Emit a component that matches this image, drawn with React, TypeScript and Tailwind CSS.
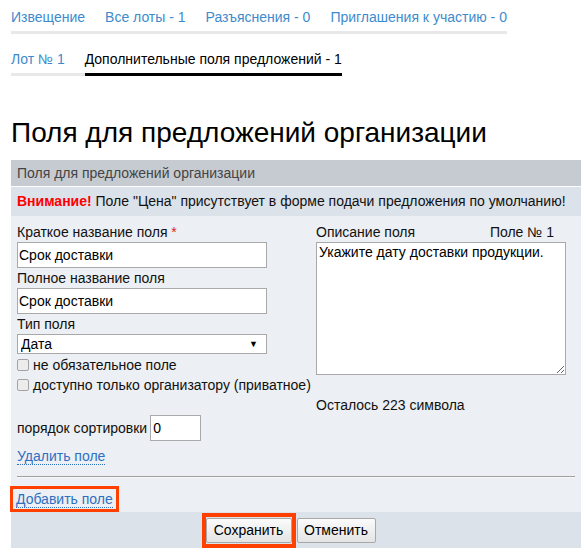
import React from "react";

export default function App() {
  return (
    <div className="font-['Liberation_Sans',Arial,sans-serif] text-[14px] text-[#111] bg-white w-[581px] h-[560px] overflow-hidden">
      {/* top tabs */}
      <div className="pl-[11px] pt-[7px]">
        <ul className="inline-flex gap-[20px] border-b-[3px] border-[#e8e8e8] pb-[4px] leading-[20px] text-[#3d8bcd]">
          <li>Извещение</li>
          <li>Все лоты - 1</li>
          <li>Разъяснения - 0</li>
          <li>Приглашения к участию - 0</li>
        </ul>
        <ul className="flex mt-[15px] leading-[20px]">
          <li className="pr-[20px] pb-[4px] border-b-[3px] border-[#e8e8e8] text-[#3d8bcd]">Лот № 1</li>
          <li className="pb-[4px] border-b-[3px] border-black text-black">Дополнительные поля предложений - 1</li>
        </ul>
      </div>

      <h1 className="ml-[11px] mt-[41px] text-[28px] leading-[32px] text-black">Поля для предложений организации</h1>

      <div className="ml-[11px] mt-[11px]">
        <div className="h-[26px] bg-[#c6cbd2] px-[6px] leading-[26px] text-[#444]">Поля для предложений организации</div>
        <div className="h-[30px] bg-[#dce2ea] border-t border-white px-[6px] leading-[29px] whitespace-nowrap">
          <b className="text-[#ff0000]">Внимание!</b> Поле "Цена" присутствует в форме подачи предложения по умолчанию!
        </div>

        <div className="bg-[#eceff3] px-[6px] pt-[7px]">
          <div className="grid grid-cols-[250px_250px] gap-x-[49px]">
            <div>
              <div className="leading-[18px]">
                Краткое название поля <span className="text-[#e02020]">*</span>
              </div>
              <input
                readOnly
                value="Срок доставки"
                className="mt-[1px] block w-[250px] h-[26px] border border-[#a9a9a9] bg-white px-[1px] text-[14px] text-black outline-none"
              />
              <div className="leading-[18px] mt-[1px]">Полное название поля</div>
              <input
                readOnly
                value="Срок доставки"
                className="mt-[1px] block w-[250px] h-[26px] border border-[#a9a9a9] bg-white px-[1px] text-[14px] text-black outline-none"
              />
              <div className="leading-[18px] mt-[1px]">Тип поля</div>
              <div className="relative mt-[1px] w-[250px] h-[20px]">
                <select className="appearance-none block w-full h-full border border-[#a9a9a9] bg-white pl-[3px] text-[14px] leading-[18px] text-black outline-none">
                  <option>Дата</option>
                </select>
                <span className="absolute right-[9px] top-[3px] text-[9px] leading-[14px] text-black pointer-events-none">▼</span>
              </div>
              <label className="flex items-center h-[20px] mt-[1px] whitespace-nowrap">
                <span className="shrink-0 w-[12px] h-[12px] rounded-[2px] border border-[#a3a3a3] bg-[#ececec] mr-[4px]" />
                не обязательное поле
              </label>
              <label className="flex items-center h-[20px] whitespace-nowrap">
                <span className="shrink-0 w-[12px] h-[12px] rounded-[2px] border border-[#a3a3a3] bg-[#ececec] mr-[4px]" />
                доступно только организатору (приватное)
              </label>
            </div>

            <div>
              <div className="flex justify-between leading-[18px] pr-[12px]">
                <span>Описание поля</span>
                <span>Поле № 1</span>
              </div>
              <textarea
                readOnly
                value="Укажите дату доставки продукции."
                className="mt-[1px] block w-[250px] h-[133px] border border-[#a9a9a9] bg-white px-[2px] py-[1px] text-[14px] leading-[17px] text-black outline-none"
              />
            </div>

            <div />
            <div className="leading-[20px]">Осталось 223 символа</div>
          </div>

          <div className="flex items-center h-[26px]">
            <span>порядок сортировки</span>
            <input
              readOnly
              value="0"
              className="ml-[3px] w-[51px] h-[26px] border border-[#a9a9a9] bg-white px-[2px] text-[14px] text-black outline-none"
            />
          </div>

          <div className="mt-[6px] leading-[18px]">
            <a className="text-[#2f6fc2] border-b border-dotted border-[#2f6fc2]">Удалить поле</a>
          </div>

          <div className="mt-[11px] h-[2px] border-t border-[#a0a0a0] border-b border-b-[#f7f7f7]" />

          <div className="mt-[8px]">
            <span className="inline-block -ml-[7px] border-[3px] border-[#ff4000] px-[3px] leading-[20px]">
              <a className="text-[#2f6fc2] border-b border-dotted border-[#2f6fc2]">Добавить поле</a>
            </span>
          </div>
        </div>

        <div className="h-[36px] bg-[#dce2ea] flex items-center justify-center pr-[15px]">
          <span className="border-[4px] border-[#ff4000] py-[1px]">
            <button className="block h-[25px] w-[86px] border border-[#a8a8a8] rounded-[2px] bg-gradient-to-b from-[#fbfbfb] to-[#e4e4e4] text-[14px] text-black">
              Сохранить
            </button>
          </span>
          <button className="ml-[1px] h-[25px] w-[79px] border border-[#a8a8a8] rounded-[2px] bg-gradient-to-b from-[#fbfbfb] to-[#e4e4e4] text-[14px] text-black">
            Отменить
          </button>
        </div>
      </div>
    </div>
  );
}
